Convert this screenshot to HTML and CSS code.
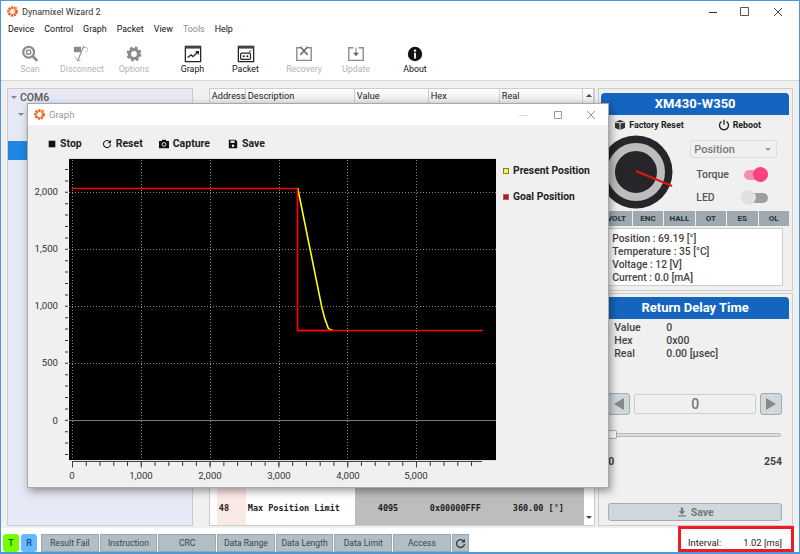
FILE: index.html
```html
<!DOCTYPE html>
<html lang="en">
<head>
    <meta charset="UTF-8">
    <meta name="viewport" content="width=device-width, initial-scale=1.0">
    <link rel="stylesheet" href="styles.css">
    <title>Dynamixel Wizard 2</title>
</head>
<body>
    <div id="main-window">
        <div class="title-bar">
            <svg class="logo" viewBox="0 0 12 12"><circle cx="6" cy="6" r="4.2" fill="none" stroke="#ec5a1c" stroke-width="3.2" stroke-dasharray="2.2 0.8"/><path d="M7 3l4.5-2.5L10 5z" fill="#f7a21b"/><circle cx="6" cy="6" r="1.2" fill="#fff"/></svg>
            <span class="title-text">Dynamixel Wizard 2</span>
            <div class="win-controls">
                <svg viewBox="0 0 12 12"><path d="M3 6.5h8" stroke="#333" fill="none"/></svg>
                <svg viewBox="0 0 12 12"><path d="M1.5 1.5h8v8h-8z" stroke="#555" fill="none"/></svg>
                <svg viewBox="0 0 12 12"><path d="M2 2l8 8M10 2l-8 8" stroke="#444" fill="none"/></svg>
            </div>
        </div>

        <div class="menu-bar">
            <span>Device</span>
            <span>Control</span>
            <span>Graph</span>
            <span>Packet</span>
            <span>View</span>
            <span class="menu-off">Tools</span>
            <span>Help</span>
        </div>

        <div class="tool-bar">
            <div class="tool-group">
                <div class="tool tool-off">
                    <svg viewBox="0 0 20 20"><circle cx="8.5" cy="8" r="6" fill="none" stroke="#777" stroke-width="2.4"/><circle cx="8.5" cy="8" r="2.4" fill="none" stroke="#777" stroke-width="1.6"/><path d="M13 12.5l5 5" stroke="#777" stroke-width="3"/></svg>
                    <span>Scan</span>
                </div>
                <div class="tool tool-off">
                    <svg viewBox="0 0 20 20"><path d="M1 2h8v6H1z" fill="#777"/><path d="M12 1L5 18" stroke="#777" fill="none" stroke-width="1.2"/><path d="M12 3c4-2 6 3 2 5M3 13c-1 3 3 5 6 4" stroke="#777" fill="none" stroke-dasharray="2 1"/></svg>
                    <span>Disconnect</span>
                </div>
                <div class="tool tool-off">
                    <svg viewBox="0 0 20 20"><circle cx="10" cy="10" r="5" fill="none" stroke="#777" stroke-width="3.6"/><circle cx="10" cy="10" r="7" fill="none" stroke="#777" stroke-width="2.6" stroke-dasharray="3 2.5"/></svg>
                    <span>Options</span>
                </div>
            </div>
            <div class="tool-group tool-group-wide">
                <div class="tool">
                    <svg viewBox="0 0 20 20"><path d="M1.5 1.5h17v17h-17z" fill="none" stroke="#222" stroke-width="1.4"/><path d="M1.5 1h17v3h-17z" fill="#444"/><path d="M4 14l4-3 2 2 5-5M13 7.5h3v3" fill="none" stroke="#222" stroke-width="1.4"/></svg>
                    <span>Graph</span>
                </div>
                <div class="tool">
                    <svg viewBox="0 0 20 20"><path d="M1.5 1.5h17v17h-17z" fill="none" stroke="#222" stroke-width="1.4"/><path d="M1.5 1h17v3h-17z" fill="#444"/><rect x="4" y="9" width="11" height="7" rx="1.5" fill="none" stroke="#222" stroke-width="1.3"/><circle cx="7.5" cy="12.5" r="1.2" fill="#222"/><circle cx="11.5" cy="12.5" r="1.2" fill="#222"/><path d="M13 8l3-2" stroke="#222" fill="none"/></svg>
                    <span>Packet</span>
                </div>
            </div>
            <div class="tool-group">
                <div class="tool tool-off">
                    <svg viewBox="0 0 20 20"><path d="M6 3H2v14h16V3h-4" fill="none" stroke="#777" stroke-width="1.5"/><path d="M6 2l8 9M14 2l-8 9" stroke="#555" stroke-width="1.8" fill="none"/></svg>
                    <span>Recovery</span>
                </div>
                <div class="tool tool-off">
                    <svg viewBox="0 0 20 20"><path d="M7 3H2v14h16V3h-5" fill="none" stroke="#777" stroke-width="1.5"/><path d="M10 3v8M7.5 9l2.5 3 2.5-3z" stroke="#555" fill="#555"/></svg>
                    <span>Update</span>
                </div>
            </div>
            <div class="tool-group tool-group-last">
                <div class="tool">
                    <svg viewBox="0 0 20 20"><circle cx="10" cy="10" r="8" fill="#111"/><circle cx="10" cy="6.2" r="1.3" fill="#fff"/><path d="M9 8.5h2V15H9z" fill="#fff"/></svg>
                    <span>About</span>
                </div>
            </div>
        </div>

        <div class="content">
            <div class="tree">
                <div class="tree-row tree-root"><i class="caret"></i>COM6</div>
                <div class="tree-row tree-lvl2"><i class="caret"></i></div>
                <div class="tree-row tree-lvl3"><i class="caret"></i></div>
                <div class="tree-row tree-sel"></div>
            </div>

            <div class="table">
                <div class="table-head">
                    <span class="col-addr">Address</span>
                    <span class="col-desc">Description</span>
                    <span class="col-val">Value</span>
                    <span class="col-hex">Hex</span>
                    <span class="col-real">Real</span>
                    <span class="col-up"><i class="caret-up"></i></span>
                </div>
                <div class="table-row">
                    <span class="row-pad"></span>
                    <span class="row-addr">48</span>
                    <span class="row-desc">Max Position Limit</span>
                    <div class="row-vals">
                        <span class="row-val">4095</span>
                        <span class="row-hex">0x00000FFF</span>
                        <span class="row-real">360.00 [°]</span>
                    </div>
                    <span class="row-scroll"><i class="caret"></i></span>
                </div>
            </div>

            <div class="side">
                <div class="panel panel-device">
                    <div class="blue-head">XM430-W350</div>
                    <div class="device-actions">
                        <span class="action">
                            <svg viewBox="0 0 12 12"><path d="M1 3l5-2 5 2v6l-5 2-5-2z" fill="#333"/><path d="M6 4v7M1 3l5 1 5-1" stroke="#eee" fill="none"/></svg>
                            Factory Reset
                        </span>
                        <span class="action">
                            <svg viewBox="0 0 12 12"><path d="M3.5 2.5a4.5 4.5 0 1 0 5 0M6 .8v5" stroke="#222" stroke-width="1.3" fill="none"/></svg>
                            Reboot
                        </span>
                    </div>
                    <div class="device-mid">
                        <svg class="knob" viewBox="0 0 74 74">
                            <circle cx="37" cy="37" r="36.5" fill="#26262a"/>
                            <circle cx="37" cy="37" r="25" fill="none" stroke="#bdbdbd" stroke-width="8"/>
                            <path d="M37 36l36 15" stroke="#e6140f" stroke-width="2"/>
                        </svg>
                        <div class="device-ctrl">
                            <div class="combo">Position<i class="caret"></i></div>
                            <div class="switch-row">Torque<span class="switch switch-on"><b></b></span></div>
                            <div class="switch-row">LED<span class="switch"><b></b></span></div>
                        </div>
                    </div>
                    <div class="flags">
                        <span>VOLT</span><span>ENC</span><span>HALL</span><span>OT</span><span>ES</span><span>OL</span>
                    </div>
                    <div class="readout">
                        <div>Position : 69.19 [°]</div>
                        <div>Temperature : 35 [°C]</div>
                        <div>Voltage : 12 [V]</div>
                        <div>Current : 0.0 [mA]</div>
                    </div>
                </div>

                <div class="panel panel-item">
                    <div class="blue-head">Return Delay Time</div>
                    <div class="item-info">
                        <span>Value</span><span>0</span>
                        <span>Hex</span><span>0x00</span>
                        <span>Real</span><span>0.00 [μsec]</span>
                    </div>
                    <div class="stepper">
                        <span class="step-btn"><i class="tri-left"></i></span>
                        <span class="step-field">0</span>
                        <span class="step-btn"><i class="tri-right"></i></span>
                    </div>
                    <div class="slider"><b></b></div>
                    <div class="slider-range"><span>0</span><span>254</span></div>
                    <div class="save-btn">
                        <svg viewBox="0 0 12 12"><path d="M4.5 1h3v4H10L6 9 2 5h2.5zM1.5 10h9v1.3h-9z" fill="#777"/></svg>
                        Save
                    </div>
                </div>
            </div>
        </div>

        <div class="status-bar">
            <span class="led led-t">T</span>
            <span class="led led-r">R</span>
            <div class="err-list">
                <span>Result Fail</span>
                <span>Instruction</span>
                <span>CRC</span>
                <span>Data Range</span>
                <span>Data Length</span>
                <span>Data Limit</span>
                <span>Access</span>
                <span class="err-refresh"><svg viewBox="0 0 12 12"><path d="M9.5 3.5A4.3 4.3 0 1 0 10.3 6.5" fill="none" stroke="#333" stroke-width="1.4"/><path d="M10.8 1v4h-4z" fill="#333"/></svg></span>
            </div>
            <div class="interval"><span>Interval:</span><span>1.02 [ms]</span></div>
        </div>
    </div>

    <div id="graph-window">
        <div class="graph-title">
            <svg class="logo" viewBox="0 0 12 12"><circle cx="6" cy="6" r="4.2" fill="none" stroke="#ec5a1c" stroke-width="3.2" stroke-dasharray="2.2 0.8"/><path d="M7 3l4.5-2.5L10 5z" fill="#f7a21b"/><circle cx="6" cy="6" r="1.2" fill="#fff"/></svg>
            <span>Graph</span>
            <div class="graph-controls">
                <svg viewBox="0 0 12 12"><path d="M0 6.5h9" stroke="#ddd" fill="none"/></svg>
                <svg viewBox="0 0 12 12"><path d="M2.5 2.5h7v7h-7z" stroke="#999" fill="none"/></svg>
                <svg viewBox="0 0 12 12"><path d="M2 2l8 8M10 2l-8 8" stroke="#999" fill="none"/></svg>
            </div>
        </div>

        <div class="graph-tools">
            <span class="g-btn g-stop"><svg viewBox="0 0 12 12"><path d="M2 2h8v8H2z" fill="#111"/></svg>Stop</span>
            <span class="g-btn g-reset"><svg viewBox="0 0 12 12"><path d="M9.5 3.5A4.3 4.3 0 1 0 10.3 6.5" fill="none" stroke="#222" stroke-width="1.3"/><path d="M10.8 1v4h-4z" fill="#222"/></svg>Reset</span>
            <span class="g-btn g-capture"><svg viewBox="0 0 12 12"><path d="M0 2.5h3L4 1h4l1 1.500h3V11H0z" fill="#111"/><circle cx="6" cy="6.5" r="2.3" fill="none" stroke="#fff"/></svg>Capture</span>
            <span class="g-btn"><svg viewBox="0 0 12 12"><path d="M1 1h8l2 2v8H1z" fill="#111"/><path d="M3 2h5v2.5H3z" fill="#fff"/><circle cx="6" cy="8" r="1.5" fill="#fff"/></svg>Save</span>
        </div>

        <div class="graph-body">
            <svg class="chart" viewBox="29 155 470 327">
                <rect x="69" y="159" width="427" height="301" fill="#000"/>
                <path d="M69 158.5h427M69 460.5h427" stroke="#ddd" fill="none"/>
                <path class="grid" d="M72.5 160v300M141.5 160v300M210.5 160v300M279.5 160v300M347.5 160v300M416.5 160v300M69 192.5h427M69 249.5h427M69 306.5h427M69 363.5h427"/>
                <path d="M69 420.5h427" stroke="#777" fill="none"/>
                <path d="M66.5 169v286" stroke="#333" stroke-width="3" fill="none" stroke-dasharray="1 10.4"/>
                <path d="M72 461.5h410" stroke="#444" fill="none"/>
                <path d="M72 464h410" stroke="#333" stroke-width="4" fill="none" stroke-dasharray="1 12.76"/>
                <path d="M72 465h345" stroke="#444" stroke-width="5" fill="none" stroke-dasharray="1 67.8"/>
                <path d="M72 188.5h225.5V330.5H483" stroke="#f00" stroke-width="1.4" fill="none"/>
                <path d="M297.7 188L321.7 306.7Q324 318 328.3 328.3Q330 330.3 333 330.3" stroke="#ff0" stroke-width="1.6" fill="none"/>
                <path d="M333 330.5H297.500V188.5" stroke="#f00" stroke-width="1.4" fill="none"/>
                <g class="y-labels">
                    <text x="58" y="195">2,000</text>
                    <text x="58" y="252">1,500</text>
                    <text x="58" y="309">1,000</text>
                    <text x="58" y="366">500</text>
                    <text x="58" y="424">0</text>
                </g>
                <g class="x-labels">
                    <text x="72" y="479">0</text>
                    <text x="141" y="479">1,000</text>
                    <text x="210" y="479">2,000</text>
                    <text x="279" y="479">3,000</text>
                    <text x="348" y="479">4,000</text>
                    <text x="416" y="479">5,000</text>
                </g>
            </svg>
            <div class="legend">
                <div class="legend-item"><i class="swatch swatch-y"></i>Present Position</div>
                <div class="legend-item"><i class="swatch swatch-r"></i>Goal Position</div>
            </div>
        </div>
    </div>
</body>
</html>
```

FILE: styles.css
```css
* {
    box-sizing: border-box;
}

body {
    margin: 0;
    width: 800px;
    height: 554px;
    overflow: hidden;
    font-family: 'Roboto', sans-serif;
    background-color: #fff;
    color: #222;
}

i {
    display: inline-block;
}

svg {
    display: block;
    flex: none;
}

#main-window {
    display: flex;
    flex-direction: column;
    height: 554px;
    border: 1px solid #4a9ad8;
    border-bottom-width: 2px;
    background-color: #fff;
}

.title-bar {
    display: flex;
    align-items: center;
    height: 21px;
    padding-left: 6px;
    font-size: 9px;
    color: #333;
}

.logo {
    width: 11px;
    height: 11px;
    margin-right: 4px;
}

.win-controls {
    display: flex;
    gap: 21px;
    margin-left: auto;
    margin-right: 15px;
    margin-top: 1px;
}

.win-controls svg {
    width: 12px;
    height: 12px;
}

.menu-bar {
    display: flex;
    gap: 10px;
    height: 14px;
    padding-left: 7px;
    align-items: center;
    font-size: 8.9px;
    color: #111;
}

.menu-off {
    color: #8a8a8a;
}

.tool-bar {
    display: flex;
    gap: 6px;
    height: 45px;
    padding-left: 3px;
    border-bottom: 1px solid #d9d9d9;
}

.tool-group {
    display: flex;
}

.tool-group-last {
    margin-left: 1px;
}

.tool {
    display: flex;
    flex-direction: column;
    align-items: center;
    width: 52px;
    padding-top: 9px;
    font-size: 8.8px;
    color: #111;
}

.tool-group-wide .tool {
    width: 53px;
}

.tool svg {
    width: 18px;
    height: 18px;
    margin-bottom: 1px;
}

.tool-off {
    color: #b4b4b4;
}

.tool-off svg {
    opacity: 0.85;
}

.content {
    flex: 1;
    display: flex;
    padding: 7px 6px 2px 6px;
    background-color: #f0f0f0;
    min-height: 0;
}

.tree {
    width: 186px;
    background-color: #e6e9f5;
    border: 1px solid #ccc;
}

.tree-row {
    display: flex;
    align-items: center;
    height: 18px;
    padding-left: 3px;
    font-size: 10.5px;
    font-weight: 500;
    color: #555;
}

.tree-root {
    height: 16px;
}

.tree-lvl2 {
    padding-left: 10px;
}

.tree-lvl3 {
    padding-left: 18px;
}

.tree-sel {
    height: 19px;
    background-color: #1e88e5;
}

.caret {
    width: 0;
    height: 0;
    margin-right: 3px;
    border-left: 3px solid transparent;
    border-right: 3px solid transparent;
    border-top: 3px solid #888;
}

.caret-up {
    width: 0;
    height: 0;
    border-left: 3px solid transparent;
    border-right: 3px solid transparent;
    border-bottom: 3px solid #444;
}

.table {
    display: flex;
    flex-direction: column;
    justify-content: space-between;
    width: 387px;
    margin-left: 16px;
    border: 1px solid #ccc;
    background-color: #fff;
}

.table-head {
    display: flex;
    height: 14px;
    font-size: 9.2px;
    line-height: 14px;
    color: #222;
    background: linear-gradient(#fff, #e8e8e8);
}

.table-head span {
    padding-left: 2px;
    border-right: 1px solid #ccc;
}

.col-addr { width: 36px; }
.col-desc { width: 109px; }
.col-val { width: 74px; }
.col-hex { width: 71px; }
.col-real { width: 83px; }

.col-up {
    flex: 1;
    text-align: center;
    line-height: 9px;
}

.table-row {
    display: flex;
    align-items: center;
    height: 37px;
    font-family: 'DejaVu Sans Mono', monospace;
    font-size: 8.5px;
    font-weight: bold;
    color: #222;
}

.table-row span {
    display: flex;
    align-items: center;
    height: 100%;
    padding-top: 2px;
}

.row-pad {
    width: 7px;
}

.row-addr {
    width: 29px;
    padding-left: 2px;
    background-color: #fbe9e7;
}

.row-desc {
    width: 109px;
    padding-left: 2px;
}

.row-vals {
    display: flex;
    width: 229px;
    height: 100%;
    background-color: #bdbdbd;
}

.row-val {
    width: 75px;
    padding-left: 23px;
}

.row-hex {
    width: 83px;
}

.row-scroll {
    flex: 1;
    justify-content: center;
    align-items: flex-end !important;
    padding-bottom: 6px;
}

.row-scroll .caret {
    margin: 0;
    border-top-color: #444;
}

.side {
    display: flex;
    flex-direction: column;
    gap: 2px;
    width: 195px;
    margin-left: 3px;
}

.panel {
    border: 1px solid #ccc;
    padding: 4px 3px 4px 2px;
}

.panel-device {
    height: 203px;
}

.panel-item {
    flex: 1;
    display: flex;
    flex-direction: column;
    padding-top: 3px;
}

.blue-head {
    height: 22px;
    border-radius: 4px 4px 0 4px;
    background-color: #1565c0;
    color: #fff;
    font-size: 13px;
    font-weight: 700;
    line-height: 22px;
    text-align: center;
}

.device-actions {
    display: flex;
    height: 20px;
    align-items: center;
    padding-left: 13px;
    gap: 34px;
    font-size: 8.8px;
    font-weight: 700;
    color: #222;
}

.action {
    display: flex;
    align-items: center;
    gap: 3px;
}

.action svg {
    width: 12px;
    height: 12px;
}

.device-mid {
    display: flex;
    height: 74px;
}

.knob {
    width: 74px;
    height: 74px;
    margin-left: -2px;
}

.device-ctrl {
    flex: 1;
    padding: 5px 12px 0 17px;
}

.combo {
    display: flex;
    justify-content: space-between;
    align-items: center;
    height: 18px;
    padding: 0 5px 0 3px;
    border: 1px solid #ddd;
    border-radius: 2px;
    font-size: 11px;
    font-weight: 500;
    color: #777;
}

.combo .caret {
    margin: 0;
    border-top-color: #999;
}

.switch-row {
    display: flex;
    align-items: center;
    justify-content: space-between;
    height: 23px;
    margin-left: 6px;
    font-size: 10.5px;
    font-weight: 500;
    color: #555;
}

.switch-row:nth-child(2) {
    margin-top: 5px;
}

.switch {
    position: relative;
    width: 24px;
    height: 10px;
    margin-right: 9px;
    border-radius: 5px;
    background-color: #9e9e9e;
}

.switch b {
    position: absolute;
    left: -3px;
    top: -2.5px;
    width: 15px;
    height: 15px;
    border-radius: 50%;
    background-color: #e0e0e0;
}

.switch-on {
    background-color: #f48fb1;
}

.switch-on b {
    left: 9px;
    background-color: #ff4081;
}

.flags {
    display: flex;
    gap: 1px;
    margin-top: 2px;
}

.flags span {
    flex: 1;
    height: 15px;
    background-color: #9eaab0;
    font-size: 8px;
    font-weight: 700;
    line-height: 15px;
    color: #263238;
    text-align: center;
}

.readout {
    margin: 2px 6px 0 7px;
    height: 58px;
    padding: 3px 3px;
    background-color: #fff;
    border: 1px solid #ccc;
    font-size: 10.3px;
    font-weight: 500;
    line-height: 13px;
    color: #444;
}

.item-info {
    display: grid;
    grid-template-columns: 52px auto;
    grid-auto-rows: 13px;
    padding: 2px 0 0 13px;
    font-size: 10.5px;
    font-weight: 500;
    line-height: 13px;
    color: #444;
}

.stepper {
    display: flex;
    justify-content: space-between;
    align-items: center;
    margin: 33px 7px 0 7px;
}

.step-btn {
    display: flex;
    align-items: center;
    justify-content: center;
    width: 22px;
    height: 22px;
    border: 1px solid #aaa;
    border-radius: 3px;
    background-color: #cfd8dc;
}

.tri-left {
    border-top: 6px solid transparent;
    border-bottom: 6px solid transparent;
    border-right: 10px solid #888;
}

.tri-right {
    border-top: 6px solid transparent;
    border-bottom: 6px solid transparent;
    border-left: 10px solid #888;
}

.step-field {
    width: 122px;
    height: 20px;
    border: 1px solid #ccc;
    border-radius: 2px;
    font-size: 14px;
    font-weight: 500;
    line-height: 18px;
    color: #777;
    text-align: center;
}

.slider {
    position: relative;
    height: 4px;
    margin: 18px 8px 0 9px;
    border: 1px solid #bbb;
    border-radius: 2px;
    background-color: #ddd;
}

.slider b {
    position: absolute;
    left: -3px;
    top: -4px;
    width: 9px;
    height: 9px;
    border: 1px solid #aaa;
    border-radius: 2px;
    background-color: #fff;
}

.slider-range {
    display: flex;
    justify-content: space-between;
    margin: 18px 7px 0 7px;
    font-size: 10.5px;
    font-weight: 700;
    line-height: 13px;
    color: #444;
}

.save-btn {
    display: flex;
    align-items: center;
    justify-content: center;
    gap: 4px;
    height: 18px;
    margin: auto 7px 0 7px;
    border: 1px solid #aaa;
    border-radius: 3px;
    background-color: #cfd8dc;
    font-size: 10.5px;
    font-weight: 700;
    color: #777;
}

.save-btn svg {
    width: 10px;
    height: 10px;
}

.status-bar {
    position: relative;
    display: flex;
    align-items: flex-end;
    height: 24px;
    padding-left: 2px;
    font-size: 8.6px;
}

.led {
    width: 16px;
    height: 18px;
    margin-right: 2px;
    border-radius: 3px;
    text-align: center;
    line-height: 18px;
    font-size: 9px;
    font-weight: 500;
}

.led-t {
    background-color: #76ff03;
    color: #1b5e20;
}

.led-r {
    background-color: #64b9ff;
    color: #0d47a1;
}

.err-list {
    display: flex;
    gap: 1px;
    margin-left: 2px;
}

.err-list span {
    width: 57.7px;
    height: 18px;
    background-color: #b0bec5;
    border: 1px solid #9aa8b0;
    text-align: center;
    line-height: 16px;
    color: #37474f;
}

.err-list .err-refresh {
    display: flex;
    align-items: center;
    justify-content: center;
    width: 17px;
}

.err-refresh svg {
    width: 11px;
    height: 11px;
}

.interval {
    display: flex;
    justify-content: space-between;
    align-items: flex-end;
    position: absolute;
    right: 5px;
    bottom: 0;
    width: 116px;
    height: 26px;
    padding: 0 9px 1px 7px;
    border: 3px solid #ed1c24;
    font-size: 9.4px;
    color: #222;
}

#graph-window {
    position: absolute;
    left: 27px;
    top: 103px;
    width: 582px;
    height: 385px;
    border: 1px solid #a8a8a8;
    background-color: #f0f0f0;
    box-shadow: 2px 3px 8px rgba(0, 0, 0, 0.4);
}

.graph-title {
    display: flex;
    align-items: center;
    height: 21px;
    padding-left: 6px;
    background-color: #fff;
    font-size: 9.6px;
    color: #999;
}

.graph-controls {
    display: flex;
    gap: 21px;
    margin-left: auto;
    margin-right: 11px;
}

.graph-controls svg {
    width: 12px;
    height: 12px;
}

.graph-tools {
    display: flex;
    height: 30px;
    padding: 7px 0 0 19px;
    align-items: center;
    font-size: 10.5px;
    font-weight: 700;
    color: #222;
}

.g-btn {
    display: flex;
    align-items: center;
    gap: 4px;
}

.g-stop {
    gap: 3px;
    margin-right: 20px;
}

.g-reset {
    margin-right: 16px;
}

.g-capture {
    margin-right: 18px;
}

.g-btn svg {
    width: 10px;
    height: 10px;
}

.graph-body {
    display: flex;
}

.chart {
    width: 470px;
    height: 327px;
    margin-left: 1px;
}

.grid {
    fill: none;
    stroke: #8a8a8a;
    stroke-dasharray: 1 2;
}

.y-labels text,
.x-labels text {
    font-size: 9.6px;
    fill: #333;
}

.y-labels text {
    text-anchor: end;
}

.x-labels text {
    text-anchor: middle;
}

.legend {
    padding: 9px 0 0 4px;
    font-size: 10.3px;
    font-weight: 700;
    color: #222;
}

.legend-item {
    display: flex;
    align-items: center;
    gap: 4px;
    height: 13px;
    margin-bottom: 13px;
    white-space: nowrap;
}

.swatch {
    width: 6px;
    height: 6px;
    border: 1px solid #777;
}

.swatch-y {
    background-color: #ff0;
}

.swatch-r {
    background-color: #e00;
}
```
